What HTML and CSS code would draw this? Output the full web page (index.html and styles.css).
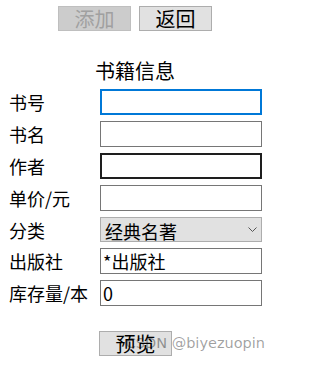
FILE: index.html
```html
<!DOCTYPE html>
<html lang="zh-CN">
<head>
<meta charset="utf-8">
<title>书籍信息</title>
<link rel="stylesheet" href="styles.css">
</head>
<body>
<div class="page">
  <div class="toolbar">
    <button class="btn" disabled>添加</button>
    <button class="btn">返回</button>
  </div>
  <h1 class="title">书籍信息</h1>
  <form class="form">
    <label class="label">书号</label>
    <input class="field field-focus" type="text">
    <label class="label">书名</label>
    <input class="field" type="text">
    <label class="label">作者</label>
    <input class="field field-hover" type="text">
    <label class="label">单价/元</label>
    <input class="field" type="text">
    <label class="label">分类</label>
    <div class="select-wrap">
      <select class="select"><option>经典名著</option></select>
      <svg class="chev" viewBox="0 0 9 5" width="9" height="5"><path d="M0.5 0.5 L4.5 4.5 L8.5 0.5" fill="none" stroke="#555" stroke-width="1"/></svg>
    </div>
    <label class="label">出版社</label>
    <input class="field" type="text" value="*出版社">
    <label class="label">库存量/本</label>
    <input class="field" type="text" value="0">
  </form>
  <div class="actions">
    <button class="btn" type="button">预览</button>
  </div>
  <div class="watermark">CSDN @biyezuopin</div>
</div>
</body>
</html>
```

FILE: styles.css
```css
html, body {
  margin: 0;
  padding: 0;
  background: #ffffff;
}

body {
  font-family: "Noto Sans CJK SC", sans-serif;
  color: #000;
}

.page {
  position: relative;
  width: 274px;
  height: 365px;
  overflow: hidden;
}

.toolbar {
  display: flex;
  gap: 8px;
  padding: 6px 0 0 58px;
}

.btn {
  width: 73px;
  height: 25px;
  box-sizing: border-box;
  margin: 0;
  padding: 0;
  border: 1px solid #adadad;
  background: #e1e1e1;
  color: #000;
  font-family: "Noto Sans CJK SC", sans-serif;
  font-size: 20px;
  line-height: 22px;
}

.btn:disabled {
  background: #cccccc;
  border-color: #bfbfbf;
  color: #a0a0a0;
}

.title {
  margin: 30px 0 0 95px;
  font-size: 20px;
  line-height: 20px;
  font-weight: normal;
}

.form {
  display: grid;
  grid-template-columns: 91px 162px;
  row-gap: 6px;
  align-items: center;
  margin: 8px 0 0 9px;
}

.label {
  font-size: 18px;
  line-height: 24px;
  white-space: nowrap;
}

.field {
  width: 162px;
  height: 26px;
  box-sizing: border-box;
  margin: 0;
  padding: 0 2px;
  border: 1px solid #767676;
  background: #fff;
  color: #000;
  font-family: "Noto Sans CJK SC", sans-serif;
  font-size: 18px;
  outline: none;
}

.field-focus {
  border: 2px solid #0078d7;
  padding: 0 1px;
}

.field-hover {
  border: 2px solid #1e1e1e;
  padding: 0 1px;
}

.select-wrap {
  position: relative;
  width: 162px;
  height: 25px;
}

.select {
  width: 162px;
  height: 25px;
  box-sizing: border-box;
  margin: 0;
  padding: 0 0 0 4px;
  border: 1px solid #adadad;
  border-radius: 0;
  background: #e1e1e1;
  color: #000;
  font-family: "Noto Sans CJK SC", sans-serif;
  font-size: 18px;
  -webkit-appearance: none;
  appearance: none;
  outline: none;
}

.chev {
  position: absolute;
  right: 5px;
  top: 10px;
}

.actions {
  padding: 25px 0 0 99px;
}

.watermark {
  position: absolute;
  right: 9px;
  top: 335px;
  font-family: "DejaVu Sans", sans-serif;
  font-size: 14.5px;
  line-height: 16px;
  color: rgba(0, 0, 0, 0.38);
  white-space: nowrap;
  pointer-events: none;
}
```
